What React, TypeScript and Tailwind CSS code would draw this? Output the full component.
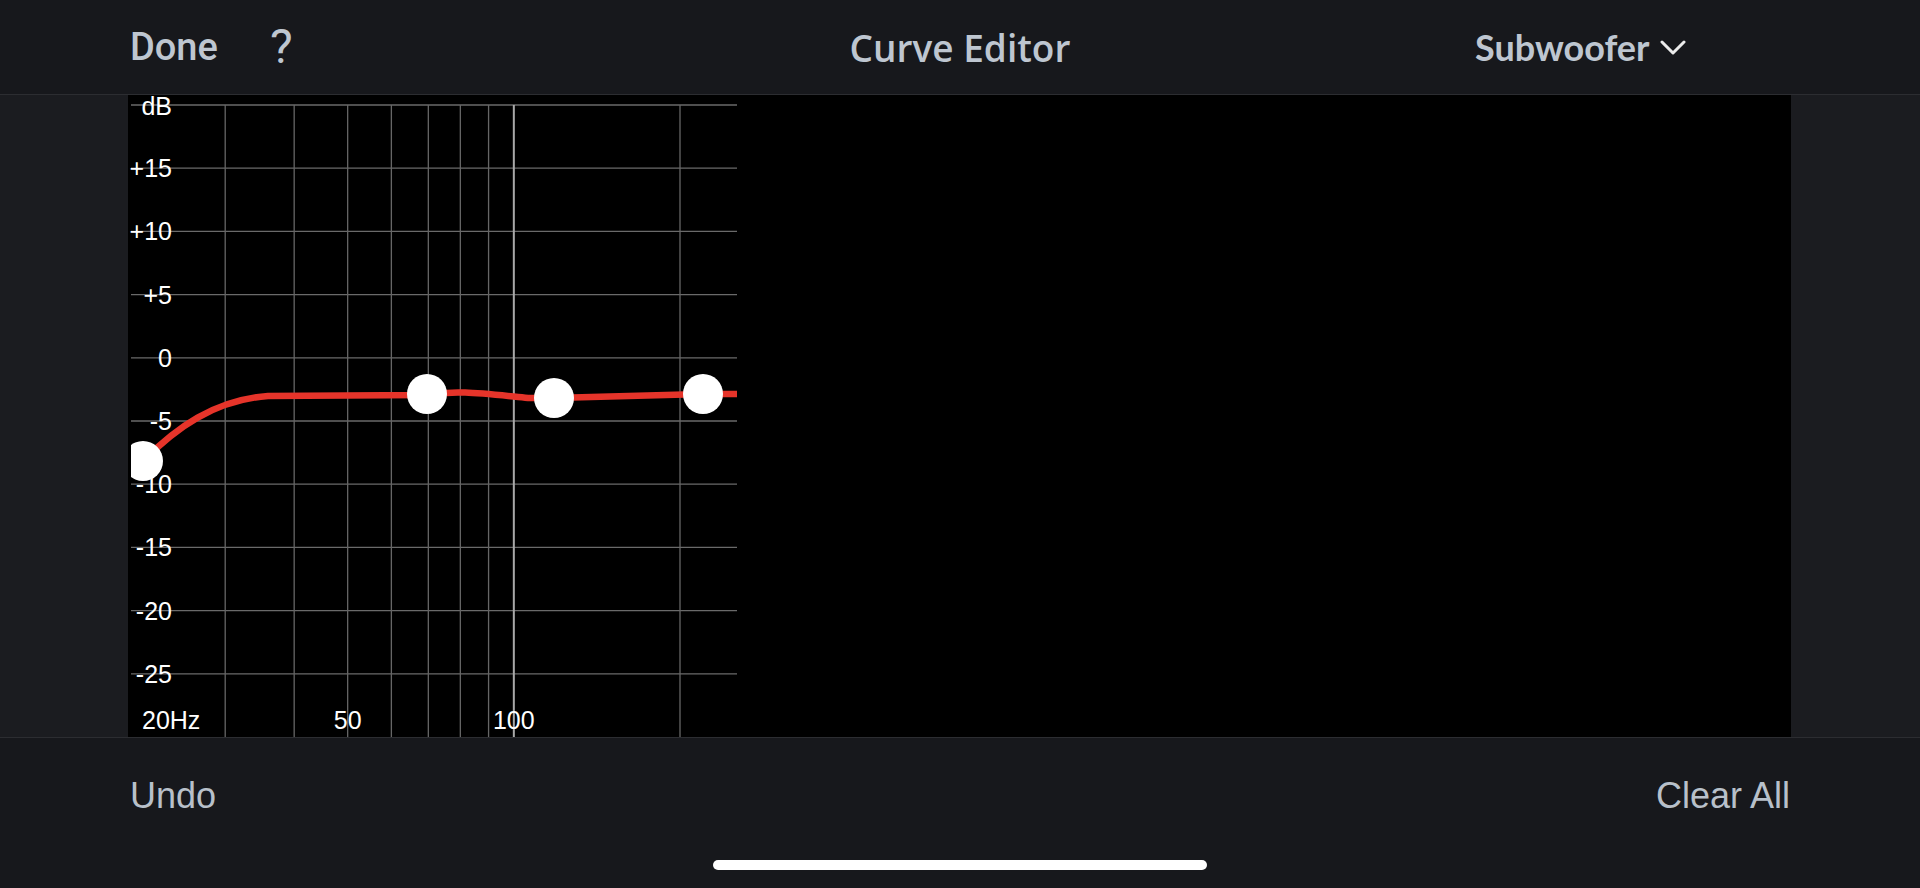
import React from "react"

const dbLabels = ["dB", "+15", "+10", "+5", "0", "-5", "-10", "-15", "-20", "-25"]
const freqLines = [30, 40, 50, 60, 70, 80, 90, 100, 200]
const DECADE = 552
const fx = (f: number) => DECADE * Math.log10(f / 20)

const knobs = [
  { x: 15, y: 367 },
  { x: 299, y: 300 },
  { x: 426, y: 304 },
  { x: 575, y: 300 },
]

function CurveChart() {
  return (
    <svg width={609} height={642} viewBox="0 0 609 642" className="block shrink-0">
      <defs>
        <clipPath id="plot">
          <rect x={3} y={0} width={606} height={642} />
        </clipPath>
      </defs>
      {dbLabels.map((_, i) => (
        <line key={"h" + i} x1={3} x2={609} y1={10 + i * 63.2} y2={10 + i * 63.2} stroke="#6a6a6a" strokeWidth={1.3} />
      ))}
      {freqLines.map((f) => (
        <line
          key={"v" + f}
          x1={fx(f)}
          x2={fx(f)}
          y1={10}
          y2={642}
          stroke={f === 100 ? "#a8a8a8" : "#666666"}
          strokeWidth={f === 100 ? 2 : 1.3}
        />
      ))}
      <g fontFamily="'Liberation Sans', Arial, sans-serif" fontSize={25} fill="#ffffff">
        {dbLabels.map((l, i) => (
          <text key={l} x={44} y={(i === 0 ? 20 : 19) + i * 63.2} textAnchor="end">
            {l}
          </text>
        ))}
        <text x={14} y={634}>20Hz</text>
        <text x={fx(50)} y={634} textAnchor="middle">50</text>
        <text x={fx(100)} y={634} textAnchor="middle">100</text>
      </g>
      <g clipPath="url(#plot)">
        <path
          d="M15 366 C 48 333, 86 305, 140 301 L 295 300 C 330 295, 350 298, 400 303 L 426 303 L 575 299 L 609 299"
          fill="none"
          stroke="#e6342a"
          strokeWidth={6.5}
        />
        {knobs.map((k, i) => (
          <circle key={i} cx={k.x} cy={k.y - 1} r={20} fill="#ffffff" />
        ))}
      </g>
    </svg>
  )
}

export default function App() {
  return (
    <div className="w-[1920px] h-[888px] flex flex-col overflow-hidden bg-[#17181c]">
      <header className="h-[95px] shrink-0 grid grid-cols-3 items-center border-b border-[#2c2d31] text-[#bec6d0] leading-none">
        <div className="flex items-center pl-[130px] gap-[52px]" style={{ fontFamily: "Roboto, 'Liberation Sans', sans-serif" }}>
          <span className="font-medium text-[38px]">Done</span>
          <span className="font-normal text-[48px]">?</span>
        </div>
        <div className="text-center font-semibold text-[37px]" style={{ fontFamily: "'Open Sans', Lato, sans-serif" }}>
          Curve Editor
        </div>
        <div className="flex items-center pl-[195px] gap-[10px]">
          <span className="font-bold text-[36px]" style={{ fontFamily: "Lato, 'Open Sans', sans-serif" }}>Subwoofer</span>
          <svg width="26" height="16" viewBox="0 0 26 16" className="mt-[2px]">
            <path d="M2 2 L13 13 L24 2" fill="none" stroke="#ececec" strokeWidth="3" strokeLinecap="round" strokeLinejoin="round" />
          </svg>
        </div>
      </header>

      <div className="h-[642px] shrink-0 flex">
        <div className="w-[128px] bg-[#1b1c20]" />
        <div className="flex-1 bg-black">
          <CurveChart />
        </div>
        <div className="w-[129px] bg-[#1b1c20]" />
      </div>

      <footer className="flex-1 flex flex-col border-t border-[#2c2d31]">
        <div
          className="flex justify-between pl-[130px] pr-[130px] pt-[40px] text-[36px] leading-none text-[#b8c0ca]"
          style={{ fontFamily: "'Liberation Sans', Arial, sans-serif" }}
        >
          <span>Undo</span>
          <span>Clear All</span>
        </div>
        <div className="mt-[46px] mx-auto w-[494px] h-[10px] rounded-full bg-white" />
      </footer>
    </div>
  )
}
